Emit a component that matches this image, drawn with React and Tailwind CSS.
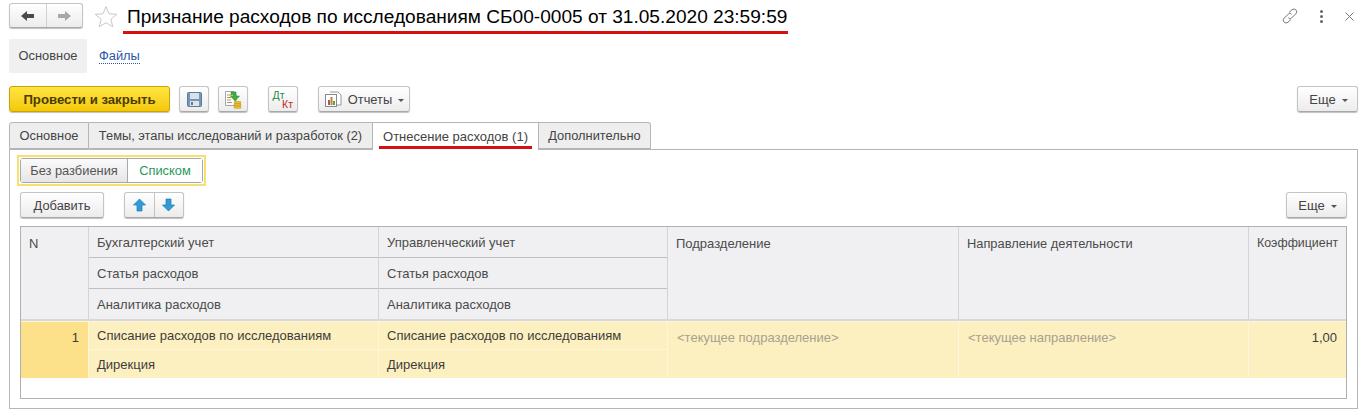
const btn = 'flex items-center justify-center h-[26px] pt-px rounded-[3px] border border-[#c4c4c4] border-b-[#a8a8a8] bg-gradient-to-b from-white to-[#ececec] shadow-[0_1px_1px_rgba(0,0,0,0.25)] text-[#444]'
const cellHead = 'flex items-center px-[8px] text-[13px] text-[#4b4b4b] bg-[#f0f0f2]'
const cellSpan = cellHead + ' row-span-3 !items-start pt-[7px]'
const cellSub = cellHead + ' pt-[1px]'
const columns = 'grid grid-cols-[67px_289px_288px_290px_289px_1fr] gap-x-px'

function Caret() {
  return <span className="ml-[6px] mt-[2px] w-0 h-0 border-x-[3px] border-x-transparent border-t-[3px] border-t-[#555]" />
}

function EscheBtn() {
  return (
    <button className={btn + ' w-[61px] text-[13px] pl-[2px]'}>
      Еще<Caret />
    </button>
  )
}

function NavArrow({ color, flip }) {
  return (
    <svg width="15" height="12" viewBox="0 0 15 12" className={flip ? 'rotate-180' : ''}>
      <path d="M1 6 L7 1 V4 H14 V8 H7 V11 Z" fill={color} />
    </svg>
  )
}

function SaveIcon() {
  return (
    <svg width="15" height="15" viewBox="0 0 15 15">
      <rect x="0.5" y="0.5" width="14" height="14" rx="1" fill="#7897b3" stroke="#5a7b9b" />
      <rect x="3" y="1" width="9" height="6" fill="#d5e2ee" />
      <rect x="3" y="9" width="9" height="5" fill="#dfe4e8" />
      <rect x="4" y="10" width="2" height="3" fill="#5a7b9b" />
    </svg>
  )
}

function PostIcon() {
  return (
    <svg width="18" height="18" viewBox="0 0 18 18">
      <path d="M1.5 0.5 H10 L12 3 V14.5 H1.5 Z" fill="#fff" stroke="#9aa7b0" />
      <path d="M3 4 H8 M3 6.5 H7 M3 9 H7 M3 11.5 H8" stroke="#c28d4a" strokeWidth="1" />
      <path d="M7 1 H12 V5 H15.5 L11 10 L6.5 5 H9 V3.5 H7 Z" fill="#3fae3f" stroke="#2a8a2a" strokeWidth="0.5" />
      <rect x="10" y="10.5" width="7" height="2.2" rx="1" fill="#f0c030" stroke="#b58a16" strokeWidth="0.5" />
      <rect x="10" y="12.8" width="7" height="2.2" rx="1" fill="#f0c030" stroke="#b58a16" strokeWidth="0.5" />
      <rect x="10" y="15.1" width="7" height="2.2" rx="1" fill="#f0c030" stroke="#b58a16" strokeWidth="0.5" />
    </svg>
  )
}

function ReportIcon() {
  return (
    <svg width="18" height="17" viewBox="0 0 18 17">
      <path d="M6 1 H14 L17 4 V14 H13" fill="#fff" stroke="#8f9aa3" />
      <rect x="1.5" y="3.5" width="11" height="12" fill="#fff" stroke="#7f8a93" />
      <rect x="4" y="9" width="2" height="5" fill="#c0504d" />
      <rect x="6.5" y="6" width="2" height="8" fill="#b08a3a" />
      <rect x="9" y="10" width="2" height="4" fill="#6a9a4a" />
    </svg>
  )
}

function MoveArrow({ down }) {
  return (
    <svg width="13" height="14" viewBox="0 0 13 14" className={down ? 'rotate-180' : ''}>
      <path d="M6.5 1 L12.5 7 H9 V13 H4 V7 H0.5 Z" fill="#2f9bd8" stroke="#2478b0" strokeWidth="0.7" />
    </svg>
  )
}

export default function App() {
  return (
    <div className="w-[1367px] h-[417px] bg-white overflow-hidden text-[#333] font-['Liberation_Sans',Arial,sans-serif]">
      {/* Title */}
      <div className="flex items-center h-[32px] pl-[9px] pr-[13px]">
        <div className={btn + ' !h-[25px] !pt-0 w-[74px] mb-[1px]'}>
          <span className="flex-1 flex justify-center border-r border-[#d0d0d0] h-full items-center"><NavArrow color="#4a4a4a" flip={false} /></span>
          <span className="flex-1 flex justify-center items-center"><NavArrow color="#a8a8a8" flip /></span>
        </div>
        <svg width="24" height="23" viewBox="0 0 24 23" className="ml-[11px]">
          <path d="M12 1.5 L15 8.8 L22.8 9.3 L16.8 14.3 L18.8 21.8 L12 17.7 L5.2 21.8 L7.2 14.3 L1.2 9.3 L9 8.8 Z" fill="#fff" stroke="#c9c9c9" />
        </svg>
        <div className="relative ml-[5px]">
          <h1 className="text-[19.1px] leading-[26px] text-black pl-[4px] pr-[1px] pt-[1px] whitespace-nowrap">Признание расходов по исследованиям СБ00-0005 от 31.05.2020 23:59:59</h1>
          <div className="absolute left-0 right-0 top-[28px] h-[3px] bg-[#d80f0f]" />
        </div>
        <div className="ml-auto flex items-center gap-[22px] text-[#777]">
          <svg width="16" height="16" viewBox="0 0 16 16" fill="none" stroke="#777" strokeWidth="1">
            <path d="M7 4.5 L10 1.8 C11.3 0.7 13 0.9 14 2 C15 3.1 15 4.7 13.9 5.8 L9.5 10 C8.5 10.9 7 10.7 6.3 9.7" />
            <path d="M9 11.5 L6 14.2 C4.7 15.3 3 15.1 2 14 C1 12.9 1 11.3 2.1 10.2 L6.5 6 C7.5 5.1 9 5.3 9.7 6.3" />
          </svg>
          <span className="flex flex-col gap-[2px]">
            <span className="w-[3px] h-[3px] rounded-full bg-[#666]" />
            <span className="w-[3px] h-[3px] rounded-full bg-[#666]" />
            <span className="w-[3px] h-[3px] rounded-full bg-[#666]" />
          </span>
          <svg width="9" height="9" viewBox="0 0 9 9" stroke="#777" strokeWidth="1"><path d="M0.5 0.5 L8.5 8.5 M8.5 0.5 L0.5 8.5" /></svg>
        </div>
      </div>

      {/* Sections */}
      <div className="flex items-center h-[34px] mt-[7px] ml-[9px]">
        <div className="flex items-center justify-center w-[78px] h-full bg-[#f0f0f0] text-[12.85px] text-[#444]">Основное</div>
        <a className="ml-[12px] text-[12.85px] text-[#2a56a8] border-b border-dotted border-[#2a56a8] leading-[14px]">Файлы</a>
      </div>

      {/* Toolbar */}
      <div className="flex items-center h-[26px] mt-[13px] mx-[9px]">
        <button className="h-[26px] w-[161px] pt-px rounded-[3px] border border-[#c9a30a] bg-gradient-to-b from-[#ffe53f] to-[#f5c800] shadow-[0_1px_1px_rgba(0,0,0,0.25)] text-[13.2px] font-bold text-[#4a3c00]">Провести и закрыть</button>
        <button className={btn + ' w-[30px] ml-[9px]'}><SaveIcon /></button>
        <button className={btn + ' w-[30px] ml-[9px]'}><PostIcon /></button>
        <button className={btn + ' w-[30px] ml-[20px] !flex-col leading-[9px] text-[10.5px]'}>
          <span className="pr-[9px] text-[#1f8a4c]">Дт</span>
          <span className="pl-[9px] text-[#c02a2a]">Кт</span>
        </button>
        <button className={btn + ' w-[92px] ml-[20px] text-[12.85px]'}>
          <ReportIcon /><span className="ml-[6px]">Отчеты</span><Caret />
        </button>
        <div className="ml-auto"><EscheBtn /></div>
      </div>

      {/* Tabs */}
      <div className="flex h-[27px] mt-[10px] mx-[9px] text-[12.85px] text-[#444] relative z-10">
        <div className="w-[80px] flex items-center justify-center bg-[#eeeeee] border border-[#b5b5b5] rounded-tl-[3px]">Основное</div>
        <div className="w-[284px] flex items-center justify-center bg-[#eeeeee] border-y border-r border-[#b5b5b5]">Темы, этапы исследований и разработок (2)</div>
        <div className="relative w-[166px] h-[28px] flex items-center justify-center bg-white border-t border-r border-[#b5b5b5]">
          <span className="text-[13px]">Отнесение расходов (1)</span>
          <div className="absolute left-[6px] right-[6px] top-[23px] h-[3px] bg-[#d80f0f]" />
        </div>
        <div className="w-[112px] flex items-center justify-center bg-[#eeeeee] border-y border-r border-[#b5b5b5] rounded-tr-[3px]">Дополнительно</div>
      </div>

      {/* Panel */}
      <div className="h-[260px] mx-[9px] border border-[#b5b5b5] px-[10px] pt-[5px]">
        <div className="w-[189px] h-[31px] border-2 border-[#f5e070] -ml-[3px] p-[1px]">
          <div className="flex h-[25px] rounded-[3px] border border-[#a8a8a8] text-[12.85px]">
            <div className="w-[107px] flex items-center justify-center bg-gradient-to-b from-[#fafafa] to-[#e6e6e6] border-r border-[#a8a8a8] text-[#555]">Без разбиения</div>
            <div className="flex-1 flex items-center justify-center bg-white text-[#1f9a5a]">Списком</div>
          </div>
        </div>

        <div className="flex items-center mt-[6px]">
          <button className={btn + ' w-[84px] text-[12.85px]'}>Добавить</button>
          <div className={btn + ' !pt-0 w-[60px] ml-[20px]'}>
            <span className="flex-1 flex justify-center items-center h-full border-r border-[#c4c4c4]"><MoveArrow /></span>
            <span className="flex-1 flex justify-center items-center"><MoveArrow down /></span>
          </div>
          <div className="ml-auto"><EscheBtn /></div>
        </div>

        {/* Table */}
        <div className="h-[173px] mt-[8px] border border-[#b0b0b0]">
          <div className={columns + ' grid-rows-[31px_31px_30px] border-b-2 border-[#d8d8d8] bg-[#d4d4d4] h-[94px]'}>
            <div className={cellSpan}>N</div>
            <div className={cellSub + ' border-b border-[#c0c0c0]'}>Бухгалтерский учет</div>
            <div className={cellSub + ' border-b border-[#c0c0c0]'}>Управленческий учет</div>
            <div className={cellSpan}>Подразделение</div>
            <div className={cellSpan + ' !text-[12.85px]'}>Направление деятельности</div>
            <div className={cellSpan + ' !text-[12.4px]'}>Коэффициент</div>
            <div className={cellSub + ' border-b border-[#c0c0c0]'}>Статья расходов</div>
            <div className={cellSub + ' border-b border-[#c0c0c0]'}>Статья расходов</div>
            <div className={cellSub}>Аналитика расходов</div>
            <div className={cellSub}>Аналитика расходов</div>
          </div>
          <div className={columns + ' grid-rows-[28px_28px] h-[57px] pt-px bg-[#fdf6d8] border-b border-[#e0e0e0] text-[13px] text-[#3d3d3d]'}>
            <div className="row-span-2 bg-[#fde08a] text-right pr-[9px] pt-[6px]">1</div>
            <div className="bg-[#fdf0c0] flex items-center px-[8px] border-b border-[#fdf6d8]">Списание расходов по исследованиям</div>
            <div className="bg-[#fdf0c0] flex items-center px-[8px] border-b border-[#fdf6d8]">Списание расходов по исследованиям</div>
            <div className="row-span-2 bg-[#fdf0c0] pl-[9px] pt-[6px] text-[#a8a090]">&lt;текущее подразделение&gt;</div>
            <div className="row-span-2 bg-[#fdf0c0] pl-[9px] pt-[6px] text-[#a8a090]">&lt;текущее направление&gt;</div>
            <div className="row-span-2 bg-[#fdf0c0] text-right pr-[9px] pt-[6px]">1,00</div>
            <div className="bg-[#fdf0c0] flex items-center px-[8px] pt-[2px]">Дирекция</div>
            <div className="bg-[#fdf0c0] flex items-center px-[8px] pt-[2px]">Дирекция</div>
          </div>
        </div>
      </div>
    </div>
  )
}
